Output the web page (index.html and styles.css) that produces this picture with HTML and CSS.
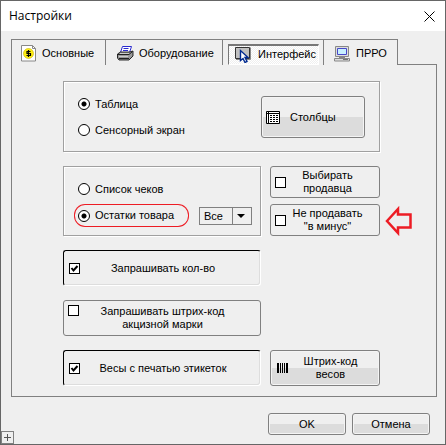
FILE: index.html
```html
<!DOCTYPE html>
<html lang="ru">
<head>
  <meta charset="UTF-8">
  <meta name="viewport" content="width=device-width, initial-scale=1.0">
  <title>Настройки</title>
  <link rel="stylesheet" href="styles.css">
</head>
<body>
  <div class="window">
    <header class="titlebar">
      <h1>Настройки</h1>
      <button class="close" aria-label="Закрыть">
        <svg width="11" height="11" viewBox="0 0 11 11"><path d="M.5 .5l10 10M10.5 .5l-10 10" fill="none" stroke="#000"/></svg>
      </button>
    </header>

    <main>
      <nav class="tabs">
        <button class="tab tab-main">
          <svg width="15" height="17" viewBox="0 0 15 17">
            <path d="M.5 .5h11l3 3v12.500h-14z" fill="#fff" stroke="#888"/>
            <path d="M11.500 .5v3h3" fill="none" stroke="#888"/>
            <circle cx="7.500" cy="8.500" r="5" fill="#ffee10" stroke="#c8b400" stroke-width=".6"/>
            <path d="M9.500 6.500h-3.500v2h3.500v2h-4M7.500 5v7" fill="none" stroke="#000" stroke-width="1.200"/>
          </svg>
          <span>Основные</span>
        </button>
        <button class="tab tab-hardware">
          <svg width="17" height="15" viewBox="0 0 17 15">
            <path d="M5.500 .5h9l-2 6h-9z" fill="#fff" stroke="#2a2ad0"/>
            <path d="M6.500 2.500h5M6 4.500h5" stroke="#2a2ad0"/>
            <path d="M.5 8l3-2h9l3.500-1v5l-4 4h-10l-1.500-2z" fill="#999" stroke="#000" stroke-width=".8"/>
            <path d="M1 8.500h11l3-2.500M2 12.500h10" fill="none" stroke="#222"/>
            <path d="M3 7.500h9M2 10.500h9" stroke="#ccc"/>
          </svg>
          <span>Оборудование</span>
        </button>
        <button class="tab tab-view active">
          <span class="pressed">
            <svg width="17" height="16" viewBox="0 0 17 16">
              <path d="M.5 .5h14v11h-14z" fill="#c0c0c0" stroke="#333"/>
              <path d="M1 12.500h14.500v-12" fill="none" stroke="#888"/>
              <path d="M5.500 3.500v10l2.500-2 2 4 2-1-2-4h3z" fill="#fff" stroke="#002a90" stroke-width="1.400"/>
            </svg>
            <span>Интерфейс</span>
          </span>
        </button>
        <button class="tab tab-prro">
          <svg width="16" height="16" viewBox="0 0 16 16">
            <path d="M1.500 .5h13v10h-13z" fill="#ddd" stroke="#888"/>
            <path d="M3.500 2.500h9v6h-9z" fill="#c8f0ff" stroke="#4848c8"/>
            <path d="M5 11.500h6" stroke="#888"/>
            <path d="M.5 12.500h15v2.500h-15z" fill="#ddd" stroke="#888"/>
            <path d="M9 13.500h5" stroke="#777"/>
          </svg>
          <span>ПРРО</span>
        </button>
      </nav>

      <section class="panel">
        <fieldset class="group view-group">
          <div class="radios">
            <label class="radio"><input type="radio" name="view" checked>Таблица</label>
            <label class="radio"><input type="radio" name="view">Сенсорный экран</label>
          </div>
          <button class="btn columns">
            <svg width="14" height="13" viewBox="0 0 14 13">
              <path d="M.5 .5h13v12h-13z" fill="#fff" stroke="#000"/>
              <path d="M0 2.500h14M2.500 0v13" stroke="#000"/>
              <path d="M4 4.500h9M4 6.500h9M4 8.500h9M4 10.500h9" stroke="#000" stroke-dasharray="2 1"/>
            </svg>
            <span>Столбцы</span>
          </button>
        </fieldset>

        <fieldset class="group list-group">
          <div class="radios">
            <label class="radio"><input type="radio" name="list">Список чеков</label>
            <label class="radio marked"><input type="radio" name="list" checked>Остатки товара</label>
          </div>
          <div class="combo">
            <select aria-label="Остатки товара">
              <option>Все</option>
            </select>
            <svg width="8" height="4" viewBox="0 0 8 4"><path d="M0 0h8l-4 4z"/></svg>
          </div>
        </fieldset>

        <div class="sellers">
          <label class="check"><input type="checkbox"><span>Выбирать<br>продавца</span></label>
          <label class="check"><input type="checkbox"><span>Не продавать<br>"в минус"</span></label>
          <svg class="arrow" width="28" height="30" viewBox="0 0 28 30"><path d="M2 15L13 3v5.500h12.500v13H13V27z" fill="none" stroke="#ed1c24" stroke-width="2.500"/></svg>
        </div>

        <label class="check wide on"><input type="checkbox" checked><span>Запрашивать кол-во</span></label>
        <label class="check wide top"><input type="checkbox"><span>Запрашивать штрих-код<br>акцизной марки</span></label>
        <label class="check wide on"><input type="checkbox" checked><span>Весы с печатью этикеток</span></label>
        <button class="btn barcode">
          <svg width="11" height="10" viewBox="0 0 11 10"><path d="M0 0h2v10h-2zM3 0h1v10h-1zM5 0h1v10h-1zM7 0h1v10h-1zM9 0h2v10h-2z"/></svg>
          <span>Штрих-код<br>весов</span>
        </button>
      </section>
    </main>

    <footer class="actions">
      <button class="btn">OK</button>
      <button class="btn">Отмена</button>
    </footer>
    <button class="expand" aria-label="Развернуть">
      <svg width="7" height="7" viewBox="0 0 7 7"><path d="M0 3.500h7M3.500 0v7" stroke="#555"/></svg>
    </button>
  </div>
</body>
</html>
```
FILE: styles.css
```css
* {
  box-sizing: border-box;
}
body {
  margin: 0;
  font: 11px/13px "Liberation Sans", Arial, sans-serif;
  color: #000;
}
button, select {
  font: inherit;
  color: inherit;
  padding: 0;
  margin: 0;
}
svg {
  flex: none;
  display: block;
}
.window {
  position: relative;
  min-height: 100vh;
  background: #efefef;
  border: 1px solid #666;
}
.titlebar {
  display: flex;
  justify-content: space-between;
  align-items: center;
  height: 30px;
  padding: 0 10px 0 8px;
  background: #fff;
}
h1 {
  margin: 0;
  font: 12px/16px "Open Sans", sans-serif;
}
.close {
  border: none;
  background: none;
}
main {
  padding: 8px 8px 0 10px;
}

/* tabs */
.tabs {
  display: flex;
  height: 26px;
  font-size: 11px;
}
.tabs::after {
  content: "";
  flex: 1;
  border-bottom: 1px solid #808080;
}
.tab {
  display: flex;
  align-items: center;
  gap: 6px;
  padding: 2px 0 0 10px;
  border: solid #808080;
  border-width: 1px 1px 0 0;
  background: none;
}
.tab-main {
  width: 95px;
  padding-left: 9px;
  border-left-width: 1px;
}
.tab-hardware {
  width: 117px;
  padding-left: 11px;
  gap: 5px;
}
.tab-view {
  width: 101px;
  padding: 3px 4px 0 5px;
}
.tab-prro {
  width: 74px;
}
.pressed {
  display: flex;
  align-items: center;
  gap: 6px;
  width: 100%;
  height: 21px;
  padding-left: 6px;
  border: 1px solid #fff;
  border-top: 2px solid #777;
  border-left: 1px solid #777;
  background: repeating-conic-gradient(#fff 0 25%, #efefef 0 50%) 0 0 / 2px 2px;
}

/* panel */
.panel {
  display: grid;
  grid-template-columns: 1fr 110px;
  gap: 14px 9px;
  padding: 16px 56px 10px 51px;
  border: 1px solid #808080;
  border-top: none;
}
.group {
  display: flex;
  justify-content: space-between;
  margin: 0;
  min-width: 0;
  border: 1px solid #a0a0a0;
  box-shadow: 1px 1px #fff, inset 1px 1px #fff;
}
.view-group {
  grid-column: span 2;
  height: 71px;
  padding: 14px 14px 0;
}
.list-group {
  padding: 12px 8px 0 10px;
}
.radios {
  display: flex;
  flex-direction: column;
}
.radio {
  display: flex;
  align-items: center;
  gap: 5px;
  height: 26px;
  white-space: nowrap;
}
.view-group .radios {
  margin-top: -5px;
}
.list-group .radios {
  margin-top: -3px;
}
.list-group .radio {
  padding: 0 6px 0 4px;
}
.list-group .marked {
  width: 115px;
  height: 23px;
  margin-top: 2px;
  border-radius: 11px;
  box-shadow: inset 0 0 0 1px #ed1c24;
}
.radio input {
  appearance: none;
  flex: none;
  width: 12px;
  height: 12px;
  margin: 0;
  border: 1px solid #000;
  border-radius: 50%;
  background: #fff;
}
.radio input:checked {
  background: radial-gradient(#000 0 2px, #fff 3px);
}
.combo {
  position: relative;
  width: 53px;
  height: 18px;
  margin-top: 28px;
}
.combo select {
  appearance: none;
  width: 100%;
  height: 100%;
  padding-left: 4px;
  border: 1px solid #808080;
  border-radius: 0;
  background: linear-gradient(#808080, #808080) 32px 0 / 1px 100% no-repeat;
}
.combo svg {
  position: absolute;
  right: 7px;
  top: 7px;
  pointer-events: none;
}

/* buttons */
.btn {
  display: flex;
  align-items: center;
  justify-content: center;
  border: 1px solid #808080;
  border-radius: 3px;
  background: linear-gradient(#efefef 50%, #dcdcdc 50%);
  box-shadow: inset 0 0 0 1px #f4f4f4;
}
.columns {
  width: 104px;
  height: 42px;
  justify-content: flex-start;
  gap: 10px;
  padding-left: 4px;
}
.barcode {
  justify-content: flex-start;
  padding: 0 6px;
}
.barcode span {
  flex: 1;
  text-align: center;
}
.sellers {
  position: relative;
  display: grid;
  gap: 6px;
}
.arrow {
  position: absolute;
  left: 115px;
  top: 40px;
}
.check {
  display: flex;
  align-items: center;
  height: 32px;
  padding: 0 10px 0 4px;
  border: 1px solid #808080;
  border-radius: 3px;
}
.check span {
  flex: 1;
  text-align: center;
  white-space: nowrap;
}
.check input {
  appearance: none;
  flex: none;
  width: 11px;
  height: 11px;
  margin: 0;
  border: 1px solid #000;
  background: #fff;
}
.check input:checked {
  background: #fff url("data:image/svg+xml,%3Csvg xmlns='http://www.w3.org/2000/svg' viewBox='0 0 9 9'%3E%3Cpath d='M1.500 4l2 2.500 4-4.500' fill='none' stroke='%23000' stroke-width='2'/%3E%3C/svg%3E");
}
.wide {
  grid-column: 1;
  height: 36px;
  padding-right: 14px;
}
.on {
  padding-left: 5px;
  border-color: #000 #fff #fff #000;
  box-shadow: inset -1px -1px #ddd;
}
.top input {
  align-self: flex-start;
  margin-top: 4px;
}

/* footer */
.actions {
  display: flex;
  justify-content: flex-end;
  gap: 6px;
  padding: 16px 15px 8px;
}
.actions .btn {
  width: 78px;
  height: 22px;
}
.expand {
  position: absolute;
  left: 0;
  bottom: 0;
  display: flex;
  align-items: center;
  justify-content: center;
  width: 13px;
  height: 13px;
  border: 1px solid #808080;
  background: none;
}
```
